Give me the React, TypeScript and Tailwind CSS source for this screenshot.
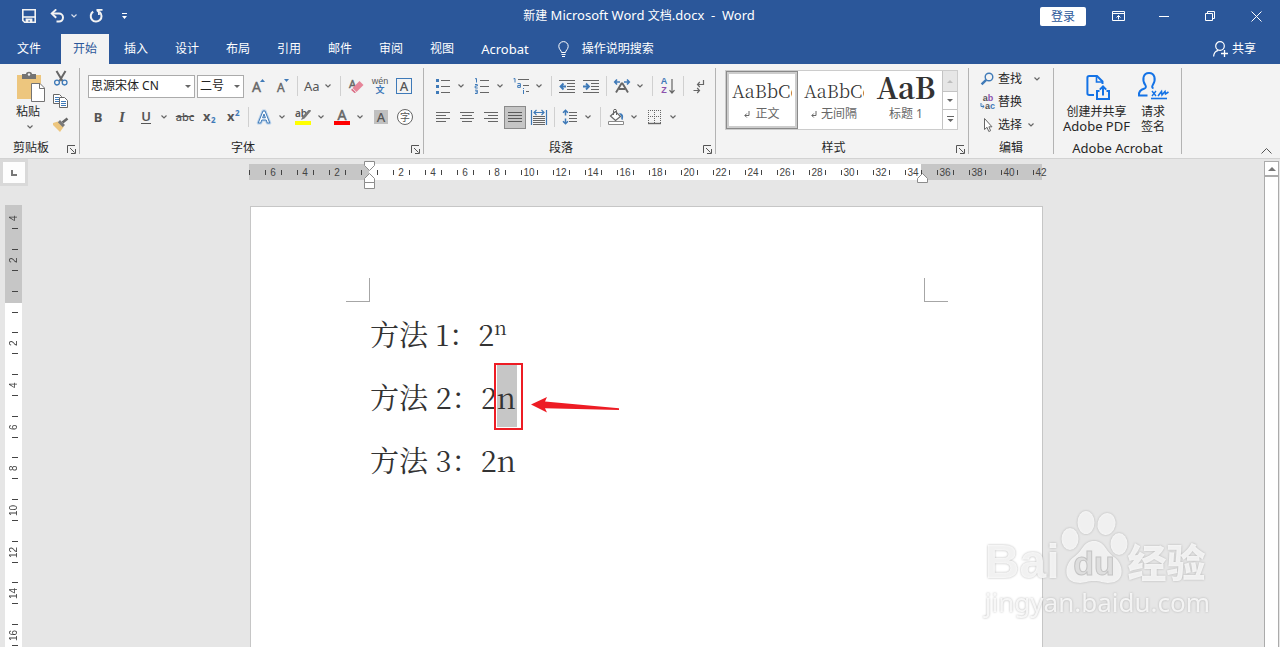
import type { ReactNode } from 'react';

const tabs = ['插入', '设计', '布局', '引用', '邮件', '审阅', '视图'];

const horizontalMarks = [
  '6', '4', '2', '', '2', '4', '6', '8', '10', '12', '14', '16', '18',
  '20', '22', '24', '26', '28', '30', '32', '34', '36', '38', '40', '42',
];

const verticalMarks = ['4', '2', '', '2', '4', '6', '8', '10', '12', '14', '16', '18'];

const GRAY = '#666666';
const BLUE = '#3f7ab8';

/* ---------- small building blocks ---------- */

function Icon({ children, size = 16 }: { children: ReactNode; size?: number }) {
  return (
    <svg width={size} height={size} viewBox={`0 0 ${size} ${size}`} fill="none" className="shrink-0 overflow-visible" aria-hidden="true">
      {children}
    </svg>
  );
}

function Chevron({ color = '#666666' }: { color?: string }) {
  return (
    <svg width="6" height="4" viewBox="0 0 6 4" fill="none" className="shrink-0" aria-hidden="true">
      <path d="M0.5 0.5L3 3L5.5 0.5" stroke={color} strokeWidth="1.2" />
    </svg>
  );
}

function Tool({ label, children }: { label: string; children: ReactNode }) {
  return (
    <button aria-label={label} className="flex h-6 w-6 shrink-0 items-center justify-center hover:bg-[#c6c6c6]">
      {children}
    </button>
  );
}

function More({ label }: { label: string }) {
  return (
    <button aria-label={label} className="flex h-6 w-[15px] shrink-0 items-center pl-[3px] hover:bg-[#c6c6c6]">
      <Chevron />
    </button>
  );
}

function Divider() {
  return <span className="mx-[3px] h-5 w-px shrink-0 bg-[#d0d0d0]" />;
}

interface GroupProps {
  title: string;
  className: string;
  titleClassName?: string;
  launcher?: boolean;
  children: ReactNode;
}

function Group({ title, className, titleClassName = '', launcher = false, children }: GroupProps) {
  return (
    <section className={`flex h-[86px] shrink-0 flex-col border-r border-[#b3b3b3] ${className}`}>
      <div className="min-h-0 flex-1">{children}</div>
      <div className="flex h-[14px] items-start">
        <h2 className={`flex-1 pt-px text-center leading-[14px] ${titleClassName}`}>{title}</h2>
        {launcher && (
          <button aria-label={`${title}设置`} className="flex h-full w-[17px] shrink-0 items-center justify-end pt-1 pr-[3px]">
            <svg width="9" height="9" viewBox="0 0 9 9" fill="none" stroke="#555555" aria-hidden="true">
              <path d="M0.5 8V0.5H8M3 3L7.5 7.5M4 8.5H8.5V4" />
            </svg>
          </button>
        )}
      </div>
    </section>
  );
}

function Combo({ label, value, className }: { label: string; value: string; className: string }) {
  return (
    <div className={`relative h-[23px] shrink-0 ${className}`}>
      <select
        aria-label={label}
        defaultValue={value}
        className="h-full w-full appearance-none border border-[#ababab] bg-white pl-[2px] text-[12px] text-[#222222] outline-none"
      >
        <option>{value}</option>
      </select>
      <svg width="6" height="3" viewBox="0 0 6 3" className="pointer-events-none absolute top-[10px] right-[4px]" aria-hidden="true">
        <path d="M0 0H6L3 3Z" fill={GRAY} />
      </svg>
    </div>
  );
}

/* ---------- title bar ---------- */

function TitleBar() {
  return (
    <header className="grid h-8 shrink-0 grid-cols-[1fr_auto_1fr] items-center text-white">
      <div className="flex items-center pl-[22px]">
        <button aria-label="保存" className="mr-[14px]">
          <Icon size={14}>
            <path d="M0.8 0.8H13.2V13.2H2.6L0.8 11.4Z" stroke="#f3f3f3" strokeWidth="1.6" />
            <path d="M1 8H13" stroke="#f3f3f3" strokeWidth="1.6" />
            <path d="M3.6 14V9.6H10.4V14H8V11.6H6.2V14Z" fill="#f3f3f3" />
          </Icon>
        </button>
        <button aria-label="撤消" className="mr-[6px]">
          <svg width="15" height="14" viewBox="0 0 15 14" fill="none" aria-hidden="true">
            <path d="M2 4.6H9A4 4 0 0 1 9 12.6H6.5" stroke="#f3f3f3" strokeWidth="2" />
            <path d="M6.2 0.4L1.8 4.6L6.2 8.8" stroke="#f3f3f3" strokeWidth="2" />
          </svg>
        </button>
        <button aria-label="撤消列表" className="mr-[12px]">
          <Chevron color="#d5ddeb" />
        </button>
        <button aria-label="重复" className="mr-[19px]">
          <Icon size={14}>
            <path d="M4.2 2.6A5.4 5.4 0 1 0 10.6 3" stroke="#f3f3f3" strokeWidth="2" />
            <path d="M7.5 0H13.5V1.8H10.8V6H9V3.6L7.5 2Z" fill="#f3f3f3" />
          </Icon>
        </button>
        <button aria-label="自定义快速访问工具栏">
          <svg width="5" height="6" viewBox="0 0 5 6" aria-hidden="true">
            <path d="M0 0H5V1H0ZM0 3H5L2.5 6Z" fill="#ffffff" />
          </svg>
        </button>
      </div>
      <h1 className="pr-[2px] pb-px whitespace-pre">
        新建<span className="text-[13px]"> Microsoft Word </span>文档<span className="text-[13px]">.docx  -  Word</span>
      </h1>
      <div className="flex items-center justify-end pr-[18px]">
        <button className="mr-[26px] h-[19px] w-[46px] rounded-[2px] bg-white leading-[19px] text-[#2b579a]">登录</button>
        <button aria-label="功能区显示选项" className="mr-[34px]">
          <svg width="13" height="10" viewBox="0 0 13 10" fill="none" stroke="#ffffff" aria-hidden="true">
            <path d="M0.5 0.5H12.5V9.5H0.5ZM0.5 2.5H12.5M6.5 8.5V4.5M4.5 6.5L6.5 4.5L8.5 6.5" />
          </svg>
        </button>
        <button aria-label="最小化" className="mr-[36px]">
          <svg width="10" height="11" viewBox="0 0 10 11" stroke="#ffffff" aria-hidden="true">
            <path d="M0 5.5H10" />
          </svg>
        </button>
        <button aria-label="还原" className="mr-[36px]">
          <svg width="10" height="10" viewBox="0 0 10 10" fill="none" stroke="#ffffff" aria-hidden="true">
            <path d="M0.5 2.5H7.5V9.5H0.5ZM2.5 2.5V0.5H9.5V7.5H7.5" />
          </svg>
        </button>
        <button aria-label="关闭">
          <svg width="11" height="11" viewBox="0 0 11 11" stroke="#ffffff" aria-hidden="true">
            <path d="M0.5 0.5L10.5 10.5M10.5 0.5L0.5 10.5" />
          </svg>
        </button>
      </div>
    </header>
  );
}

function TabBar() {
  return (
    <nav className="flex h-8 shrink-0 items-end text-white">
      <button className="h-[30px] w-[61px] pr-[3px]">文件</button>
      <div className="flex gap-[3px]">
        <button className="h-[30px] bg-[#f3f3f3] px-3 text-[#2b579a]">开始</button>
        {tabs.map((tab) => (
          <button key={tab} className="h-[30px] px-3 hover:bg-[#3e6db5]">
            {tab}
          </button>
        ))}
        <button className="h-[30px] px-3 text-[13px] hover:bg-[#3e6db5]">Acrobat</button>
      </div>
      <button className="ml-[17px] flex h-[30px] items-center gap-[13px]">
        <svg width="11" height="16" viewBox="0 0 11 16" fill="none" stroke="#ffffff" aria-hidden="true">
          <path d="M3.5 11.5C3.5 9.5 0.8 8.4 0.8 5.3A4.7 4.7 0 0 1 10.2 5.3C10.2 8.4 7.5 9.5 7.5 11.5ZM3.5 13.5H7.5M4 15.5H7" />
        </svg>
        操作说明搜索
      </button>
      <button className="mr-6 ml-auto flex h-[30px] items-center gap-[4px]">
        <svg width="15" height="16" viewBox="0 0 15 16" fill="none" stroke="#ffffff" aria-hidden="true">
          <path d="M0.6 15.5C0.8 12 2.6 10 5.4 9.4" strokeWidth="1.2" />
          <circle cx="7" cy="5" r="4.3" strokeWidth="1.2" />
          <path d="M11.5 9V16M8 12.5H15" strokeWidth="1.3" />
        </svg>
        共享
      </button>
    </nav>
  );
}

/* ---------- ribbon groups ---------- */

function ClipboardGroup() {
  return (
    <Group title="剪贴板" className="w-20" launcher>
      <div className="flex pt-[3px] pl-[16px]">
        <button className="mr-[7px] flex w-[30px] flex-col items-start">
          <svg width="29" height="33" viewBox="0 0 29 33" fill="none" aria-hidden="true">
            <path d="M1 4H25V28H1Z" fill="#edc67e" />
            <path d="M6 3H10C10 0 16 0 16 3H20V8H6Z" fill="#737373" />
            <circle cx="13" cy="3.5" r="1.2" fill="#f3f3f3" />
            <path d="M15.5 12.5H24L28.5 17V30.5H15.5Z" fill="#ffffff" stroke="#737373" />
            <path d="M23.5 12.5V17.5H28.5" stroke="#737373" />
          </svg>
          <span className="leading-[16px]">粘贴</span>
          <span className="flex h-[14px] w-6 items-center justify-center pl-1">
            <Chevron />
          </span>
        </button>
        <div className="flex flex-col gap-[7px]">
          <button aria-label="剪切">
            <Icon>
              <path d="M3.5 0L9.5 10M12.5 0L6.5 10" stroke={GRAY} strokeWidth="2" />
              <circle cx="4" cy="11.6" r="2.4" stroke={BLUE} strokeWidth="1.3" />
              <circle cx="11.6" cy="11.6" r="2.4" stroke={BLUE} strokeWidth="1.3" />
            </Icon>
          </button>
          <button aria-label="复制">
            <Icon>
              <path d="M0.5 0.5H6.5L8.5 2.5V9.5H0.5Z" fill="#ffffff" stroke={GRAY} />
              <path d="M2 3.5H6M2 5.5H6M2 7.5H6" stroke={BLUE} />
              <path d="M6.5 3.5H11.5L14.5 6.5V13.5H6.5Z" fill="#ffffff" stroke={GRAY} />
              <path d="M8 7.500H13M8 9.500H13M8 11.500H13" stroke={BLUE} />
            </Icon>
          </button>
          <button aria-label="格式刷">
            <Icon>
              <path d="M0 6L5 4.5L10.5 10L7 15L0 8Z" fill="#edc67e" />
              <path d="M4.8 5.2L7 3L12 8L9.8 10.2Z" fill="#7a7a7a" />
              <path d="M9.5 5.5L14.5 1.5" stroke={GRAY} strokeWidth="2.6" />
            </Icon>
          </button>
        </div>
      </div>
    </Group>
  );
}

function FontGroup() {
  return (
    <Group title="字体" className="w-[344px]" launcher>
      <div className="flex flex-col gap-[5px] pt-[5px] text-[#555555]">
        <div className="flex h-[26px] items-center pl-2">
          <Combo label="字体" value="思源宋体 CN" className="mr-[2px] w-[107px]" />
          <Combo label="字号" value="二号" className="mr-[2px] w-[47px]" />
          <Tool label="增大字号">
            <Icon>
              <text x="2" y="14" fontSize="14" fontFamily="Noto Sans" fill={GRAY} stroke={GRAY} strokeWidth="0.4">A</text>
              <path d="M10 4H15L12.5 1Z" fill={BLUE} />
            </Icon>
          </Tool>
          <Tool label="减小字号">
            <Icon>
              <text x="3" y="14" fontSize="12" fontFamily="Noto Sans" fill={GRAY} stroke={GRAY} strokeWidth="0.4">A</text>
              <path d="M10 1H15L12.5 4Z" fill={BLUE} />
            </Icon>
          </Tool>
          <Divider />
          <button aria-label="更改大小写" className="flex h-6 w-9 items-center justify-between pr-[6px] pl-[3px] text-[13px]">
            Aa <Chevron />
          </button>
          <Divider />
          <Tool label="清除格式">
            <Icon>
              <text x="1" y="10" fontSize="11" fontFamily="Noto Sans" fill={GRAY} stroke={GRAY} strokeWidth="0.4">A</text>
              <path d="M11.5 3L15.5 7L8.5 14L4.5 10Z" fill="#e68599" />
              <path d="M4 10.6L8 14.6L6.6 15L3.2 12Z" fill="#d9667f" />
            </Icon>
          </Tool>
          <Tool label="拼音指南">
            <span className="flex flex-col items-center font-['Liberation_Sans','Noto_Sans_CJK_SC',sans-serif] text-[9px] leading-[9px]">
              <span>wén</span>
              <b className="text-[#3f7ab8]">文</b>
            </span>
          </Tool>
          <Tool label="字符边框">
            <span className="flex h-4 w-4 items-center justify-center border border-[#3f7ab8] text-[13px] leading-none font-medium">A</span>
          </Tool>
        </div>
        <div className="flex h-[26px] items-center pl-[6px]">
          <Tool label="加粗"><b className="text-[13px]">B</b></Tool>
          <Tool label="倾斜"><i className="font-['Liberation_Serif',serif] text-[15px] font-semibold">I</i></Tool>
          <Tool label="下划线"><span className="border-b border-[#555555] text-[13px] leading-[13px] font-semibold">U</span></Tool>
          <More label="下划线样式" />
          <Tool label="删除线"><s className="text-[11px] font-medium">abc</s></Tool>
          <Tool label="下标">
            <Icon>
              <text x="2" y="12" fontSize="13" fontWeight="700" fontFamily="Noto Sans" fill="#555555">x</text>
              <text x="10" y="14" fontSize="8" fontWeight="700" fontFamily="Noto Sans" fill={BLUE}>2</text>
            </Icon>
          </Tool>
          <Tool label="上标">
            <Icon>
              <text x="2" y="12" fontSize="13" fontWeight="700" fontFamily="Noto Sans" fill="#555555">x</text>
              <text x="10" y="7" fontSize="8" fontWeight="700" fontFamily="Noto Sans" fill={BLUE}>2</text>
            </Icon>
          </Tool>
          <Divider />
          <Tool label="文本效果">
            <Icon>
              <path d="M2.2 14L7 2H9L13.8 14H11.3L10.2 11H5.8L4.7 14ZM6.6 8.8H9.4L8 5Z" fill="#ffffff" stroke="#b7d0ea" strokeWidth="3" strokeLinejoin="round" />
              <path d="M2.2 14L7 2H9L13.8 14H11.3L10.2 11H5.8L4.7 14ZM6.6 8.8H9.4L8 5Z" fill="#ffffff" stroke={BLUE} />
            </Icon>
          </Tool>
          <More label="文本效果选项" />
          <Tool label="突出显示">
            <Icon>
              <text x="0" y="8" fontSize="10" fontWeight="600" fontFamily="Noto Sans" fill="#555555">ab</text>
              <path d="M15.5 1L16 2L9.5 9.5L6 11L7.5 7.5L13.5 1Z" fill="#777777" />
              <path d="M0 12H16V16H0Z" fill="#ffff00" />
            </Icon>
          </Tool>
          <More label="突出显示颜色" />
          <Tool label="字体颜色">
            <Icon>
              <text x="8" y="11" textAnchor="middle" fontSize="14" fontFamily="Noto Sans" fill={GRAY} stroke={GRAY} strokeWidth="0.5">A</text>
              <path d="M0 12H16V16H0Z" fill="#ff0000" />
            </Icon>
          </Tool>
          <More label="字体颜色选项" />
          <Tool label="字符底纹">
            <span className="flex h-[14px] w-[14px] items-center justify-center bg-[#c0c0c0] text-[13px] leading-none font-medium">A</span>
          </Tool>
          <Tool label="带圈字符">
            <span className="flex h-4 w-4 items-center justify-center rounded-full border border-[#666666] bg-white text-[10px] leading-none">字</span>
          </Tool>
        </div>
      </div>
    </Group>
  );
}

function ParagraphGroup() {
  return (
    <Group title="段落" className="w-[292px]" launcher>
      <div className="flex flex-col gap-[5px] pt-[5px] pl-[7px]">
        <div className="flex h-[26px] items-center">
          <Tool label="项目符号">
            <Icon>
              <path d="M6 2.5H15M6 8.5H15M6 14.5H15" stroke={GRAY} />
              <path d="M1 1H4V4H1ZM1 7H4V10H1ZM1 13H4V16H1Z" fill={BLUE} />
            </Icon>
          </Tool>
          <More label="项目符号库" />
          <Tool label="编号">
            <Icon>
              <path d="M6 2.5H15M6 8.5H15M6 14.5H15" stroke={GRAY} />
              <path d="M1 0.8L2.5 0.5V4.5M1 6.5H3.3V8H1.2V10H3.8M1 12.2H3.3V15.5H1M1.5 13.8H3.3" stroke={BLUE} />
            </Icon>
          </Tool>
          <More label="编号库" />
          <Tool label="多级列表">
            <Icon>
              <path d="M5 1.5H16M10 7.5H16M13 13.5H16" stroke={GRAY} />
              <path d="M0.5 0.8L2 0.5V4.5M4.5 5.6H7.4V9.4H4.7V7.5H7.4M10.5 10V11M10.5 12V16" stroke={BLUE} />
            </Icon>
          </Tool>
          <More label="多级列表库" />
          <Divider />
          <Tool label="减少缩进量">
            <Icon>
              <path d="M0 2.5H16M8 5.5H16M8 8.5H16M8 11.5H16M0 14.5H16" stroke={GRAY} />
              <path d="M7 8.5H1.5M4.5 5.5L1.5 8.5L4.5 11.5" stroke={BLUE} strokeWidth="1.8" />
            </Icon>
          </Tool>
          <Tool label="增加缩进量">
            <Icon>
              <path d="M0 2.5H16M8 5.5H16M8 8.5H16M8 11.5H16M0 14.5H16" stroke={GRAY} />
              <path d="M0 8.5H5.5M3 5.5L6 8.5L3 11.5" stroke={BLUE} strokeWidth="1.8" />
            </Icon>
          </Tool>
          <Divider />
          <Tool label="中文版式">
            <Icon>
              <path d="M2 14.5L7.5 5.5H8.5L14 14.5M5 11H11" stroke={GRAY} strokeWidth="1.9" />
              <path d="M6 4H1M3 1.5L0.7 4L3 6.5M10 4H15M13 1.5L15.3 4L13 6.5" stroke={BLUE} strokeWidth="1.6" />
            </Icon>
          </Tool>
          <More label="中文版式选项" />
          <Divider />
          <Tool label="排序">
            <span className="flex items-center gap-[2px]">
              <span className="flex flex-col items-center font-['Liberation_Sans',sans-serif] text-[9px] leading-[9px] font-bold">
                <span className="text-[#3f7ab8]">A</span>
                <span className="text-[#8c52ad]">Z</span>
              </span>
              <svg width="6" height="16" viewBox="0 0 6 16" fill="none" aria-hidden="true">
                <path d="M3 1V15M0.5 12.2L3 15L5.5 12.2" stroke={GRAY} strokeWidth="1.2" />
              </svg>
            </span>
          </Tool>
          <Divider />
          <Tool label="显示编辑标记">
            <Icon>
              <path d="M12.5 2V6.5H6.5M8.8 4L6.5 6.5L8.8 9M2.5 12.5H8.5M6.2 10L8.5 12.5L6.2 15" stroke={GRAY} strokeWidth="1.2" />
            </Icon>
          </Tool>
        </div>
        <div className="flex h-[26px] items-center">
          <Tool label="左对齐">
            <Icon><path d="M1 3.5H15M1 6.5H11M1 9.5H15M1 12.5H11" stroke={GRAY} /></Icon>
          </Tool>
          <Tool label="居中">
            <Icon><path d="M1 3.5H15M3 6.5H13M1 9.5H15M3 12.5H13" stroke={GRAY} /></Icon>
          </Tool>
          <Tool label="右对齐">
            <Icon><path d="M1 3.5H15M5 6.5H15M1 9.5H15M5 12.5H15" stroke={GRAY} /></Icon>
          </Tool>
          <button
            aria-label="两端对齐"
            aria-pressed="true"
            className="mx-px flex h-[23px] w-[22px] shrink-0 items-center justify-center border border-[#8a8a8a] bg-[#c5c5c5]"
          >
            <Icon><path d="M1 3.5H15M1 6.5H15M1 9.5H15M1 12.5H15" stroke="#5a5a5a" /></Icon>
          </button>
          <Tool label="分散对齐">
            <Icon>
              <path d="M0.5 1V16M15.5 1V16M3 3.5H13M5.5 1L3 3.5L5.5 6M10.5 1L13 3.5L10.5 6" stroke={BLUE} strokeWidth="1.2" />
              <path d="M2 7.5H14M2 9.5H14M2 11.5H14M2 13.5H14M2 15.5H14" stroke={GRAY} />
            </Icon>
          </Tool>
          <Divider />
          <Tool label="行距">
            <Icon>
              <path d="M7 3.5H15M7 6.5H15M7 9.5H15M7 12.5H15" stroke={GRAY} />
              <path d="M3.5 1.5V6.5M1 3.8L3.5 1.3L6 3.8M3.5 9.5V14.5M1 12.2L3.5 14.7L6 12.2" stroke={BLUE} strokeWidth="1.5" />
            </Icon>
          </Tool>
          <More label="行距选项" />
          <Divider />
          <Tool label="底纹">
            <Icon>
              <path d="M2.5 7L7.5 2.5L12.5 7.5L7.5 11.5Z" fill="#ffffff" stroke={GRAY} strokeWidth="1.2" />
              <path d="M5.5 6V1.5C5.5 0 8.5 0 8.5 1.5V6" stroke={GRAY} />
              <path d="M11 4C15 4 16 7 14.5 11C13.5 11 12.8 9.5 13.4 7.5Z" fill={BLUE} />
              <path d="M0.5 12.5H15.5V15.5H0.5Z" fill="#ffffff" stroke="#8a8a8a" />
            </Icon>
          </Tool>
          <More label="底纹颜色" />
          <Tool label="边框">
            <Icon>
              <path d="M1 1.5H14M1 7.5H14M1.5 1V14M7.5 1V14M13.5 1V14" stroke={GRAY} strokeDasharray="1 1" />
              <path d="M1 14.5H14" stroke={GRAY} strokeWidth="1.4" />
            </Icon>
          </Tool>
          <More label="边框选项" />
        </div>
      </div>
    </Group>
  );
}

function ReturnMark() {
  return (
    <svg width="6" height="7" viewBox="0 0 6 7" fill="none" stroke="#666666" aria-hidden="true">
      <path d="M5 0V4.5H1M2.8 2.5L0.8 4.5L2.8 6.5" />
    </svg>
  );
}

function StylesGroup() {
  return (
    <Group title="样式" className="w-[253px]" launcher>
      <div className="pt-[2px] pl-[9px]">
        <div className="flex h-[60px] w-[233px] border border-[#cccccc] bg-white text-[#666666]">
          <button className="flex w-[72px] flex-col overflow-hidden border border-[#8a8a8a] bg-[#cdcdcd] p-[2px]">
            <span className="flex w-full flex-1 flex-col items-center overflow-hidden bg-white">
              <span className="w-[60px] overflow-hidden pt-[4px] text-left font-['Noto_Serif_CJK_SC','Liberation_Serif',serif] text-[18px] leading-[24px] font-light text-[#333333] [font-kerning:none]">
                AaBbCc
              </span>
              <span className="flex items-center gap-[5px] leading-[24px]"><ReturnMark />正文</span>
            </span>
          </button>
          <button className="flex w-[72px] flex-col items-center overflow-hidden pt-[3px]">
            <span className="w-[60px] overflow-hidden pt-[4px] text-left font-['Noto_Serif_CJK_SC','Liberation_Serif',serif] text-[18px] leading-[24px] font-light text-[#333333] [font-kerning:none]">
              AaBbCc
            </span>
            <span className="flex items-center gap-[4px] leading-[24px]"><ReturnMark />无间隔</span>
          </button>
          <button className="flex w-[72px] flex-col items-center overflow-hidden">
            <span className="h-[31px] font-['Noto_Serif_CJK_SC','Liberation_Serif',serif] text-[29px] leading-[31px] font-bold text-[#333333]">AaB</span>
            <span className="leading-[24px]">标题 1</span>
          </button>
          <div className="ml-auto flex w-[15px] flex-col border-l border-[#c3c3c3]">
            <button aria-label="上一行" className="flex h-5 items-center justify-center bg-[#e6e6e6]">
              <svg width="6" height="3" viewBox="0 0 6 3" aria-hidden="true"><path d="M0 3H6L3 0Z" fill="#bdbdbd" /></svg>
            </button>
            <button aria-label="下一行" className="flex h-[19px] items-center justify-center border-y border-[#c3c3c3]">
              <svg width="6" height="3" viewBox="0 0 6 3" aria-hidden="true"><path d="M0 0H6L3 3Z" fill={GRAY} /></svg>
            </button>
            <button aria-label="更多样式" className="flex flex-1 items-center justify-center">
              <svg width="7" height="7" viewBox="0 0 7 7" aria-hidden="true"><path d="M0 0H7V1H0ZM0.5 3H6.5L3.5 6Z" fill={GRAY} /></svg>
            </button>
          </div>
        </div>
      </div>
    </Group>
  );
}

function EditingGroup() {
  return (
    <Group title="编辑" className="w-[85px]">
      <div className="-mt-px flex flex-col items-start pl-[11px] [&>button]:flex [&>button]:h-[23px] [&>button]:items-center">
        <button>
          <Icon>
            <circle cx="9" cy="6" r="3.8" stroke={BLUE} strokeWidth="1.4" />
            <path d="M6.2 8.8L1.6 13.4" stroke={BLUE} strokeWidth="2.4" />
          </Icon>
          <span className="mr-3 ml-[2px]">查找</span>
          <Chevron />
        </button>
        <button>
          <span className="flex w-4 flex-col font-['Liberation_Sans',sans-serif] text-[9px] leading-[8px] font-bold text-[#555555]">
            <span>a<span className="text-[#8c52ad]">b</span></span>
            <span className="flex items-center">
              <svg width="5" height="6" viewBox="0 0 5 6" fill="none" stroke={BLUE} aria-hidden="true">
                <path d="M1 0V3.5H4M2.5 2L4.2 3.5L2.5 5" />
              </svg>
              a<span className="text-[#3f7ab8]">c</span>
            </span>
          </span>
          <span className="ml-[2px]">替换</span>
        </button>
        <button>
          <Icon>
            <path d="M4.5 1.5V12.5L7 10.3L8.8 14.5L10.6 13.7L8.9 9.8H12Z" fill="#ffffff" stroke={GRAY} />
          </Icon>
          <span className="mr-[6px] ml-[2px]">选择</span>
          <Chevron />
        </button>
      </div>
    </Group>
  );
}

function AcrobatGroup() {
  return (
    <Group title="Adobe Acrobat" className="w-32" titleClassName="text-[13px]">
      <div className="flex items-start gap-[7px] pt-[3px] pl-[9px] leading-[15px]">
        <button className="flex flex-col items-center">
          <svg width="24" height="29" viewBox="0 0 24 29" fill="none" stroke="#1473e6" strokeWidth="2" className="mb-1 ml-1" aria-hidden="true">
            <path d="M8 24H3.2C2 24 1.4 23.4 1.4 22.2V6.8C1.4 5.6 2 5 3.2 5H11L16.5 10.5V13" />
            <path d="M10.5 5.5V11H16" strokeWidth="1.6" />
            <path d="M13.5 20H11V28H23V20H20.5M17 24.5V15.5M13.8 18.6L17 15.4L20.2 18.6" />
          </svg>
          <span>创建并共享</span>
          <span className="text-[13px] leading-[15px]">Adobe PDF</span>
        </button>
        <button className="flex flex-col items-center">
          <svg width="32" height="29" viewBox="0 0 32 29" fill="none" stroke="#1473e6" strokeWidth="2" className="mb-1" aria-hidden="true">
            <path d="M10.5 24.5H2C1.5 20.5 4 18.5 7.5 17.5C9 17 9.3 15.5 8.3 14C4.8 9 6 2 12 2C18 2 19.2 9 15.8 14C14.8 15.5 15 17 16.5 17.4" />
            <path d="M15 20L19 25M19 20L15 25" strokeWidth="1.4" />
            <path d="M21 25L24.5 20.5L25 24L28 20.5L28.5 23L31.5 21" strokeWidth="1.6" />
            <path d="M14 27.5H30" strokeWidth="1.6" />
          </svg>
          <span>请求</span>
          <span>签名</span>
        </button>
      </div>
    </Group>
  );
}

function Ribbon() {
  return (
    <div className="flex h-[95px] shrink-0 border-b border-[#d2d2d2] bg-[#f3f3f3] pt-1 text-[#262626]">
      <ClipboardGroup />
      <FontGroup />
      <ParagraphGroup />
      <StylesGroup />
      <EditingGroup />
      <AcrobatGroup />
      <button aria-label="折叠功能区" className="mr-2 mb-1 ml-auto self-end">
        <svg width="11" height="6" viewBox="0 0 11 6" fill="none" stroke="#555555" aria-hidden="true">
          <path d="M0.5 5.5L5.5 0.5L10.5 5.5" />
        </svg>
      </button>
    </div>
  );
}

/* ---------- workspace ---------- */

function HorizontalRuler() {
  return (
    <div className="relative mt-[5px] flex h-4 w-[795px] shrink-0 items-center bg-[linear-gradient(90deg,#c6c6c6_120px,#fff_120px,#fff_672px,#c6c6c6_672px,#c6c6c6_793px,transparent_793px)] font-['Liberation_Sans',sans-serif] text-[10px] text-[#444444]">
      <span className="mr-[7px] h-[5px] w-px shrink-0 bg-[#444444]" />
      {horizontalMarks.map((mark, index) => (
        <span key={index} className="flex w-8 shrink-0 items-center justify-center">
          <span className="h-[5px] w-px bg-[#444444]" />
          <span className="w-[15px] pt-[2px] text-center">{mark}</span>
          <span className={index < horizontalMarks.length - 1 ? 'h-[5px] w-px bg-[#444444]' : 'w-px'} />
        </span>
      ))}
      <svg width="11" height="28" viewBox="0 0 11 28" className="absolute top-[-3px] left-[115px]" fill="#ffffff" stroke="#8c8c8c" aria-hidden="true">
        <path d="M0.5 0.5H10.5V4.5L5.5 9.5L0.5 4.5Z" />
        <path d="M0.5 21.5V17.5L5.5 12.5L10.5 17.5V21.5ZM0.5 21.5H10.5V27.5H0.5Z" />
      </svg>
      <svg width="11" height="10" viewBox="0 0 11 10" className="absolute top-[9px] left-[668px]" fill="#ffffff" stroke="#8c8c8c" aria-hidden="true">
        <path d="M0.5 9.5V5.5L5.5 0.5L10.5 5.5V9.5Z" />
      </svg>
    </div>
  );
}

function VerticalRuler() {
  return (
    <div className="flex w-[29px] shrink-0 flex-col">
      <button aria-label="制表符" className="flex h-[27px] w-7 shrink-0 items-center justify-center bg-[#d9d9d9]">
        <span className="flex h-[21px] w-[22px] items-center justify-center bg-[#fdfdfd]">
          <span className="h-[6px] w-[6px] border-b-2 border-l-2 border-[#777777]" />
        </span>
      </button>
      <div className="mt-[19px] ml-[5px] flex min-h-0 w-[17px] flex-1 flex-col overflow-hidden bg-[linear-gradient(180deg,#c6c6c6_98px,#fff_98px)] font-['Liberation_Sans',sans-serif] text-[10px] text-[#444444]">
        <div className="-mt-2">
          {verticalMarks.map((mark, index) => (
            <div
              key={index}
              className={`flex flex-col items-center justify-center ${index % 3 === 2 ? 'h-[41px]' : 'h-[42px]'}`}
            >
              <span className={index > 0 ? 'ml-[3px] h-px w-[6px] bg-[#444444]' : 'h-px'} />
              <span className="flex h-5 rotate-180 items-center justify-center leading-[12px] [writing-mode:vertical-rl]">{mark}</span>
              <span className="ml-[3px] h-px w-[6px] bg-[#444444]" />
            </div>
          ))}
        </div>
      </div>
    </div>
  );
}

function Document() {
  return (
    <article className="mt-[26px] w-[793px] flex-1 border border-b-0 border-[#c6c6c6] bg-white">
      <div className="flex justify-between pt-[71px] pr-[94px] pl-[95px]">
        <span className="h-6 w-6 border-r border-b border-[#a6a6a6]" />
        <span className="h-6 w-6 border-b border-l border-[#a6a6a6]" />
      </div>
      <div className="pl-[119px] font-['Noto_Serif_CJK_SC','Noto_Sans_CJK_SC',serif] text-[29px] leading-[63px] text-[#333333] [font-kerning:none] [&>p]:h-[63px]">
        <p>
          方法 1{'\uFF1A'}2<sup className="top-0 align-super text-[19px] leading-none">n</sup>
        </p>
        <p className="flex">
          <span>方法 2{'\uFF1A'}2</span>
          <span className="relative h-[62px] bg-[#c6c6c6] pr-px">
            n
            <span className="absolute top-[-2px] left-[-3px] h-[67px] w-[29px] border-2 border-[#ed1c24]" />
            <svg width="88" height="16" viewBox="0 0 88 16" className="absolute top-8 left-[34px]" fill="#ed1c24" aria-hidden="true">
              <path d="M0 7.5L16 0L14 4.5L88 11.2V13L14 11.2L16 15.5Z" />
            </svg>
          </span>
        </p>
        <p>
          方法 3{'\uFF1A'}2n
        </p>
      </div>
    </article>
  );
}

function ScrollBar() {
  return (
    <div className="flex w-4 shrink-0 flex-col pt-[2px] pr-px">
      <button aria-label="向上滚动" className="flex h-[15px] shrink-0 items-center justify-center border border-[#ababab] bg-white">
        <svg width="8" height="4" viewBox="0 0 8 4" aria-hidden="true"><path d="M0 4H8L4 0Z" fill="#777777" /></svg>
      </button>
      <div className="flex-1 border border-b-0 border-[#ababab] bg-white" />
    </div>
  );
}

function Watermark() {
  return (
    <div className="pointer-events-none absolute right-[70px] bottom-[26px] font-['Noto_Sans','Noto_Sans_CJK_SC',sans-serif] text-white/80 [filter:drop-shadow(0_0_1px_#a8a8a8)]">
      <div className="flex h-[78px] items-end">
        <span className="font-['Liberation_Sans',sans-serif] text-[48px] leading-[42px] font-bold">Bai</span>
        <svg width="68" height="74" viewBox="0 0 68 74" className="shrink-0" fill="currentColor" aria-hidden="true">
          <ellipse cx="10" cy="30" rx="8.5" ry="11" />
          <ellipse cx="26" cy="13.5" rx="8.5" ry="11.5" />
          <ellipse cx="46.5" cy="15" rx="9" ry="11" transform="rotate(12 46.5 15)" />
          <ellipse cx="59" cy="35" rx="8.5" ry="11" />
          <path d="M34 32C45 32 45 42 54 48C63 54 66 71 52 73.5C44 75 42 72 34 72C26 72 24 75 16 73.5C2 71 5 54 14 48C23 42 23 32 34 32Z" />
          <text x="34" y="66" textAnchor="middle" fontSize="34" fontWeight="700" fontFamily="Liberation Sans" fill="#dedede" stroke="#c4c4c4">du</text>
        </svg>
        <span className="text-[39px] leading-[42px] font-black">经验</span>
      </div>
      <p className="text-[26px] leading-[38px]">jingyan.baidu.com</p>
    </div>
  );
}

export default function App() {
  return (
    <div className="relative flex h-screen flex-col overflow-hidden bg-[#2b579a] font-['Noto_Sans','Noto_Sans_CJK_SC',sans-serif] text-[12px] leading-[16px]">
      <TitleBar />
      <TabBar />
      <Ribbon />
      <div className="flex min-h-0 flex-1 bg-[#e6e6e6]">
        <VerticalRuler />
        <main className="flex min-w-0 flex-1 flex-col items-center">
          <HorizontalRuler />
          <Document />
        </main>
        <ScrollBar />
      </div>
      <Watermark />
    </div>
  );
}
